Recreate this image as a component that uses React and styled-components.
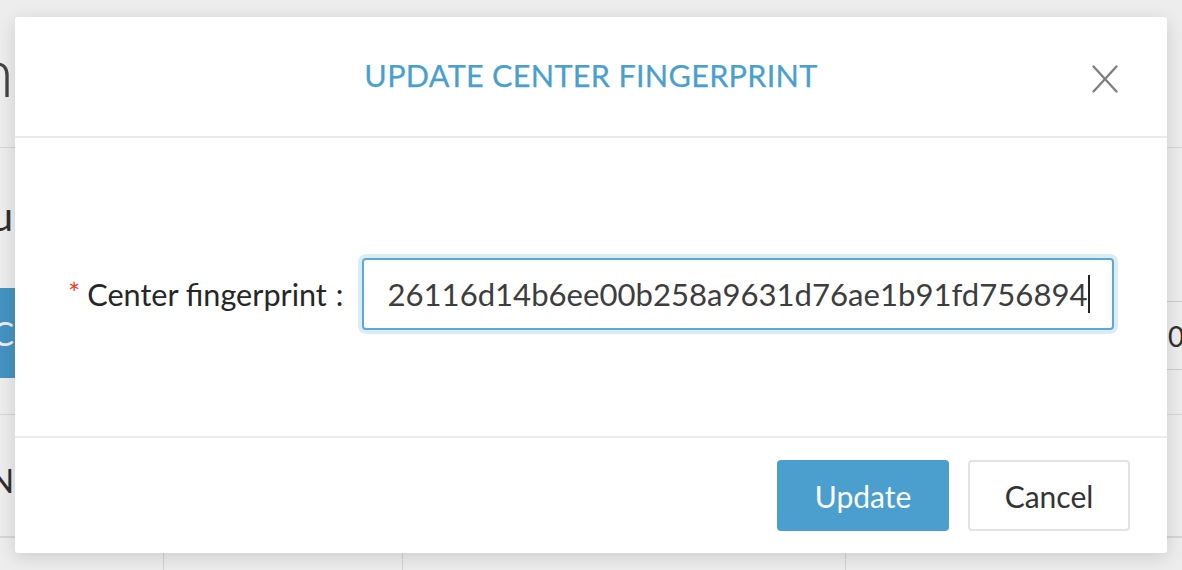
import React from "react";
import styled, { createGlobalStyle } from "styled-components";

const GlobalStyle = createGlobalStyle`
  html, body { margin: 0; padding: 0; }
  body { font-family: Lato, "Open Sans", sans-serif; background: #ffffff; }
  * { box-sizing: border-box; }
`;

const Screen = styled.div`
  position: relative;
  width: 1182px;
  height: 570px;
  overflow: hidden;
  background: #ffffff;
`;

/* ---------- page behind the dialog ---------- */
const Backdrop = styled.div`
  display: grid;
  grid-template-columns: 15px 1fr 15px;
  grid-template-rows: 148px 267px 122px 1fr;
  width: 100%;
  height: 100%;
  background: #ffffff;
`;

const Cell = styled.div`
  display: flex;
  flex-direction: column;
  align-items: ${(p) => (p.$side === "left" ? "flex-end" : "flex-start")};
  overflow: hidden;
  border-bottom: ${(p) => (p.$ruled ? "1px solid #e6e6e6" : "none")};
  padding-top: ${(p) => p.$top || 0}px;
  gap: ${(p) => p.$gap || 0}px;
  white-space: nowrap;
`;

const PageTitle = styled.div`
  font-size: 69px;
  font-weight: 300;
  line-height: 1;
  color: #4a4a4a;
  margin-right: 1px;
`;

const PageText = styled.div`
  align-self: ${(p) => (p.$lead ? "flex-start" : "auto")};
  margin-left: ${(p) => p.$lead || 0}px;
  margin-right: ${(p) => (p.$lead ? 0 : 2)}px;
  font-size: ${(p) => p.$size || 30}px;
  letter-spacing: ${(p) => p.$spacing || 0}px;
  line-height: 1;
  color: #333;
`;

const PageButton = styled.div`
  align-self: flex-start;
  display: flex;
  align-items: center;
  height: 90px;
  margin-left: -32px;
  padding: 0 24px;
  background: #4a9fcf;
  color: #fff;
  font-size: 33px;
  border-radius: 4px;
`;

const FieldBox = styled.div`
  display: flex;
  align-items: center;
  width: 200px;
  height: 69px;
  border-top: 1px solid #dcdcdc;
  border-bottom: 1px solid #dcdcdc;
  margin-top: 153px;
  padding-left: 1px;
  font-size: 28px;
  color: #333;
`;

const TableRow = styled.div`
  grid-column: 1 / -1;
  display: grid;
  grid-template-columns: 164px 239px 443px 1fr;
  border-top: 1px solid #e6e6e6;
`;

const TableCell = styled.div`
  border-right: ${(p) => (p.$last ? "none" : "1px solid #e2e2e2")};
`;

/* ---------- dialog ---------- */
const Overlay = styled.div`
  position: absolute;
  inset: 0;
  display: flex;
  align-items: center;
  justify-content: center;
  background: rgba(0, 0, 0, 0.07);
`;

const Dialog = styled.div`
  display: flex;
  flex-direction: column;
  width: 1152px;
  height: 536px;
  background: #ffffff;
  border-radius: 3px;
  box-shadow: 0 4px 18px rgba(0, 0, 0, 0.14);
`;

const Header = styled.div`
  display: grid;
  grid-template-columns: 80px 1fr 80px;
  align-items: center;
  height: 121px;
  border-bottom: 2px solid #ececec;
  flex-shrink: 0;
`;

const Title = styled.h2`
  grid-column: 2;
  margin: 0;
  text-align: center;
  font-size: 30.6px;
  font-weight: 400;
  line-height: 1;
  color: #4a9fcc;
  letter-spacing: 0.3px;
  -webkit-text-stroke: 0.25px #4a9fcc;
`;

const CloseButton = styled.button`
  grid-column: 3;
  justify-self: start;
  display: flex;
  align-items: center;
  justify-content: center;
  width: 26px;
  height: 28px;
  padding: 0;
  margin-left: 5px;
  margin-top: 5px;
  border: none;
  background: transparent;
  color: #7d7d7d;
  cursor: pointer;
`;

const Body = styled.div`
  display: flex;
  align-items: center;
  height: 298px;
  padding: 14px 53px 0 53px;
  flex-shrink: 0;
`;

const FormRow = styled.div`
  display: grid;
  grid-template-columns: auto 1fr;
  align-items: center;
  column-gap: 18px;
  width: 100%;
`;

const Label = styled.label`
  display: flex;
  align-items: center;
  font-size: 30.6px;
  color: #262626;
  white-space: nowrap;
`;

const Required = styled.span`
  color: #e0462c;
  font-size: 29px;
  line-height: 1;
  margin-right: 7px;
  margin-top: -4px;
`;

const Colon = styled.span`
  margin-left: 9px;
`;

const InputBox = styled.div`
  display: flex;
  align-items: center;
  height: 72px;
  padding-left: 24px;
  border: 2px solid #5aa9d6;
  border-radius: 4px;
  box-shadow: 0 0 0 4px rgba(74, 159, 207, 0.2);
  font-size: 31.1px;
  color: #3d3d3d;
  white-space: nowrap;
  overflow: hidden;
`;

const Caret = styled.span`
  display: inline-block;
  width: 2px;
  height: 38px;
  margin-left: 1px;
  background: #222;
`;

const Footer = styled.div`
  display: flex;
  align-items: center;
  justify-content: flex-end;
  gap: 19px;
  flex: 1;
  padding: 0 37px 0 0;
  border-top: 2px solid #ececec;
`;

const Button = styled.button`
  display: flex;
  align-items: center;
  justify-content: center;
  width: ${(p) => (p.$primary ? 172 : 162)}px;
  height: 71px;
  padding: 0;
  border-radius: 4px;
  border: 2px solid ${(p) => (p.$primary ? "#4a9fcf" : "#e3e3e3")};
  background: ${(p) => (p.$primary ? "#4a9fcf" : "#ffffff")};
  color: ${(p) => (p.$primary ? "#ffffff" : "#333333")};
  font-family: Lato, "Open Sans", sans-serif;
  font-size: 30px;
  cursor: pointer;
`;

const CloseIcon = () => (
  <svg width="26" height="28" viewBox="0 0 26 28" fill="none">
    <path d="M1.5 1.5 L24.5 26.5 M24.5 1.5 L1.5 26.5" stroke="currentColor" strokeWidth="2.3" strokeLinecap="round" />
  </svg>
);

export default function App() {
  return (
    <>
      <GlobalStyle />
      <Screen>
        <Backdrop>
          <Cell $side="left" $ruled $top={36}>
            <PageTitle>Administration</PageTitle>
          </Cell>
          <Cell $ruled />
          <Cell $ruled />

          <Cell $side="left" $ruled $top={48} $gap={52}>
            <PageText $size={40}>Menu</PageText>
            <PageButton>Create</PageButton>
          </Cell>
          <Cell $ruled />
          <Cell $side="right" $ruled>
            <FieldBox>0</FieldBox>
          </Cell>

          <Cell $side="left" $ruled $top={49}>
            <PageText $size={33} $lead={-11} $spacing={4}>Name</PageText>
          </Cell>
          <Cell $ruled />
          <Cell $ruled />

          <TableRow>
            <TableCell />
            <TableCell />
            <TableCell />
            <TableCell $last />
          </TableRow>
        </Backdrop>

        <Overlay>
          <Dialog role="dialog" aria-labelledby="dlg-title">
            <Header>
              <Title id="dlg-title">UPDATE CENTER FINGERPRINT</Title>
              <CloseButton aria-label="Close">
                <CloseIcon />
              </CloseButton>
            </Header>
            <Body>
              <FormRow>
                <Label>
                  <Required>*</Required>
                  Center fingerprint
                  <Colon>:</Colon>
                </Label>
                <InputBox>
                  26116d14b6ee00b258a9631d76ae1b91fd756894
                  <Caret />
                </InputBox>
              </FormRow>
            </Body>
            <Footer>
              <Button $primary>Update</Button>
              <Button>Cancel</Button>
            </Footer>
          </Dialog>
        </Overlay>
      </Screen>
    </>
  );
}
